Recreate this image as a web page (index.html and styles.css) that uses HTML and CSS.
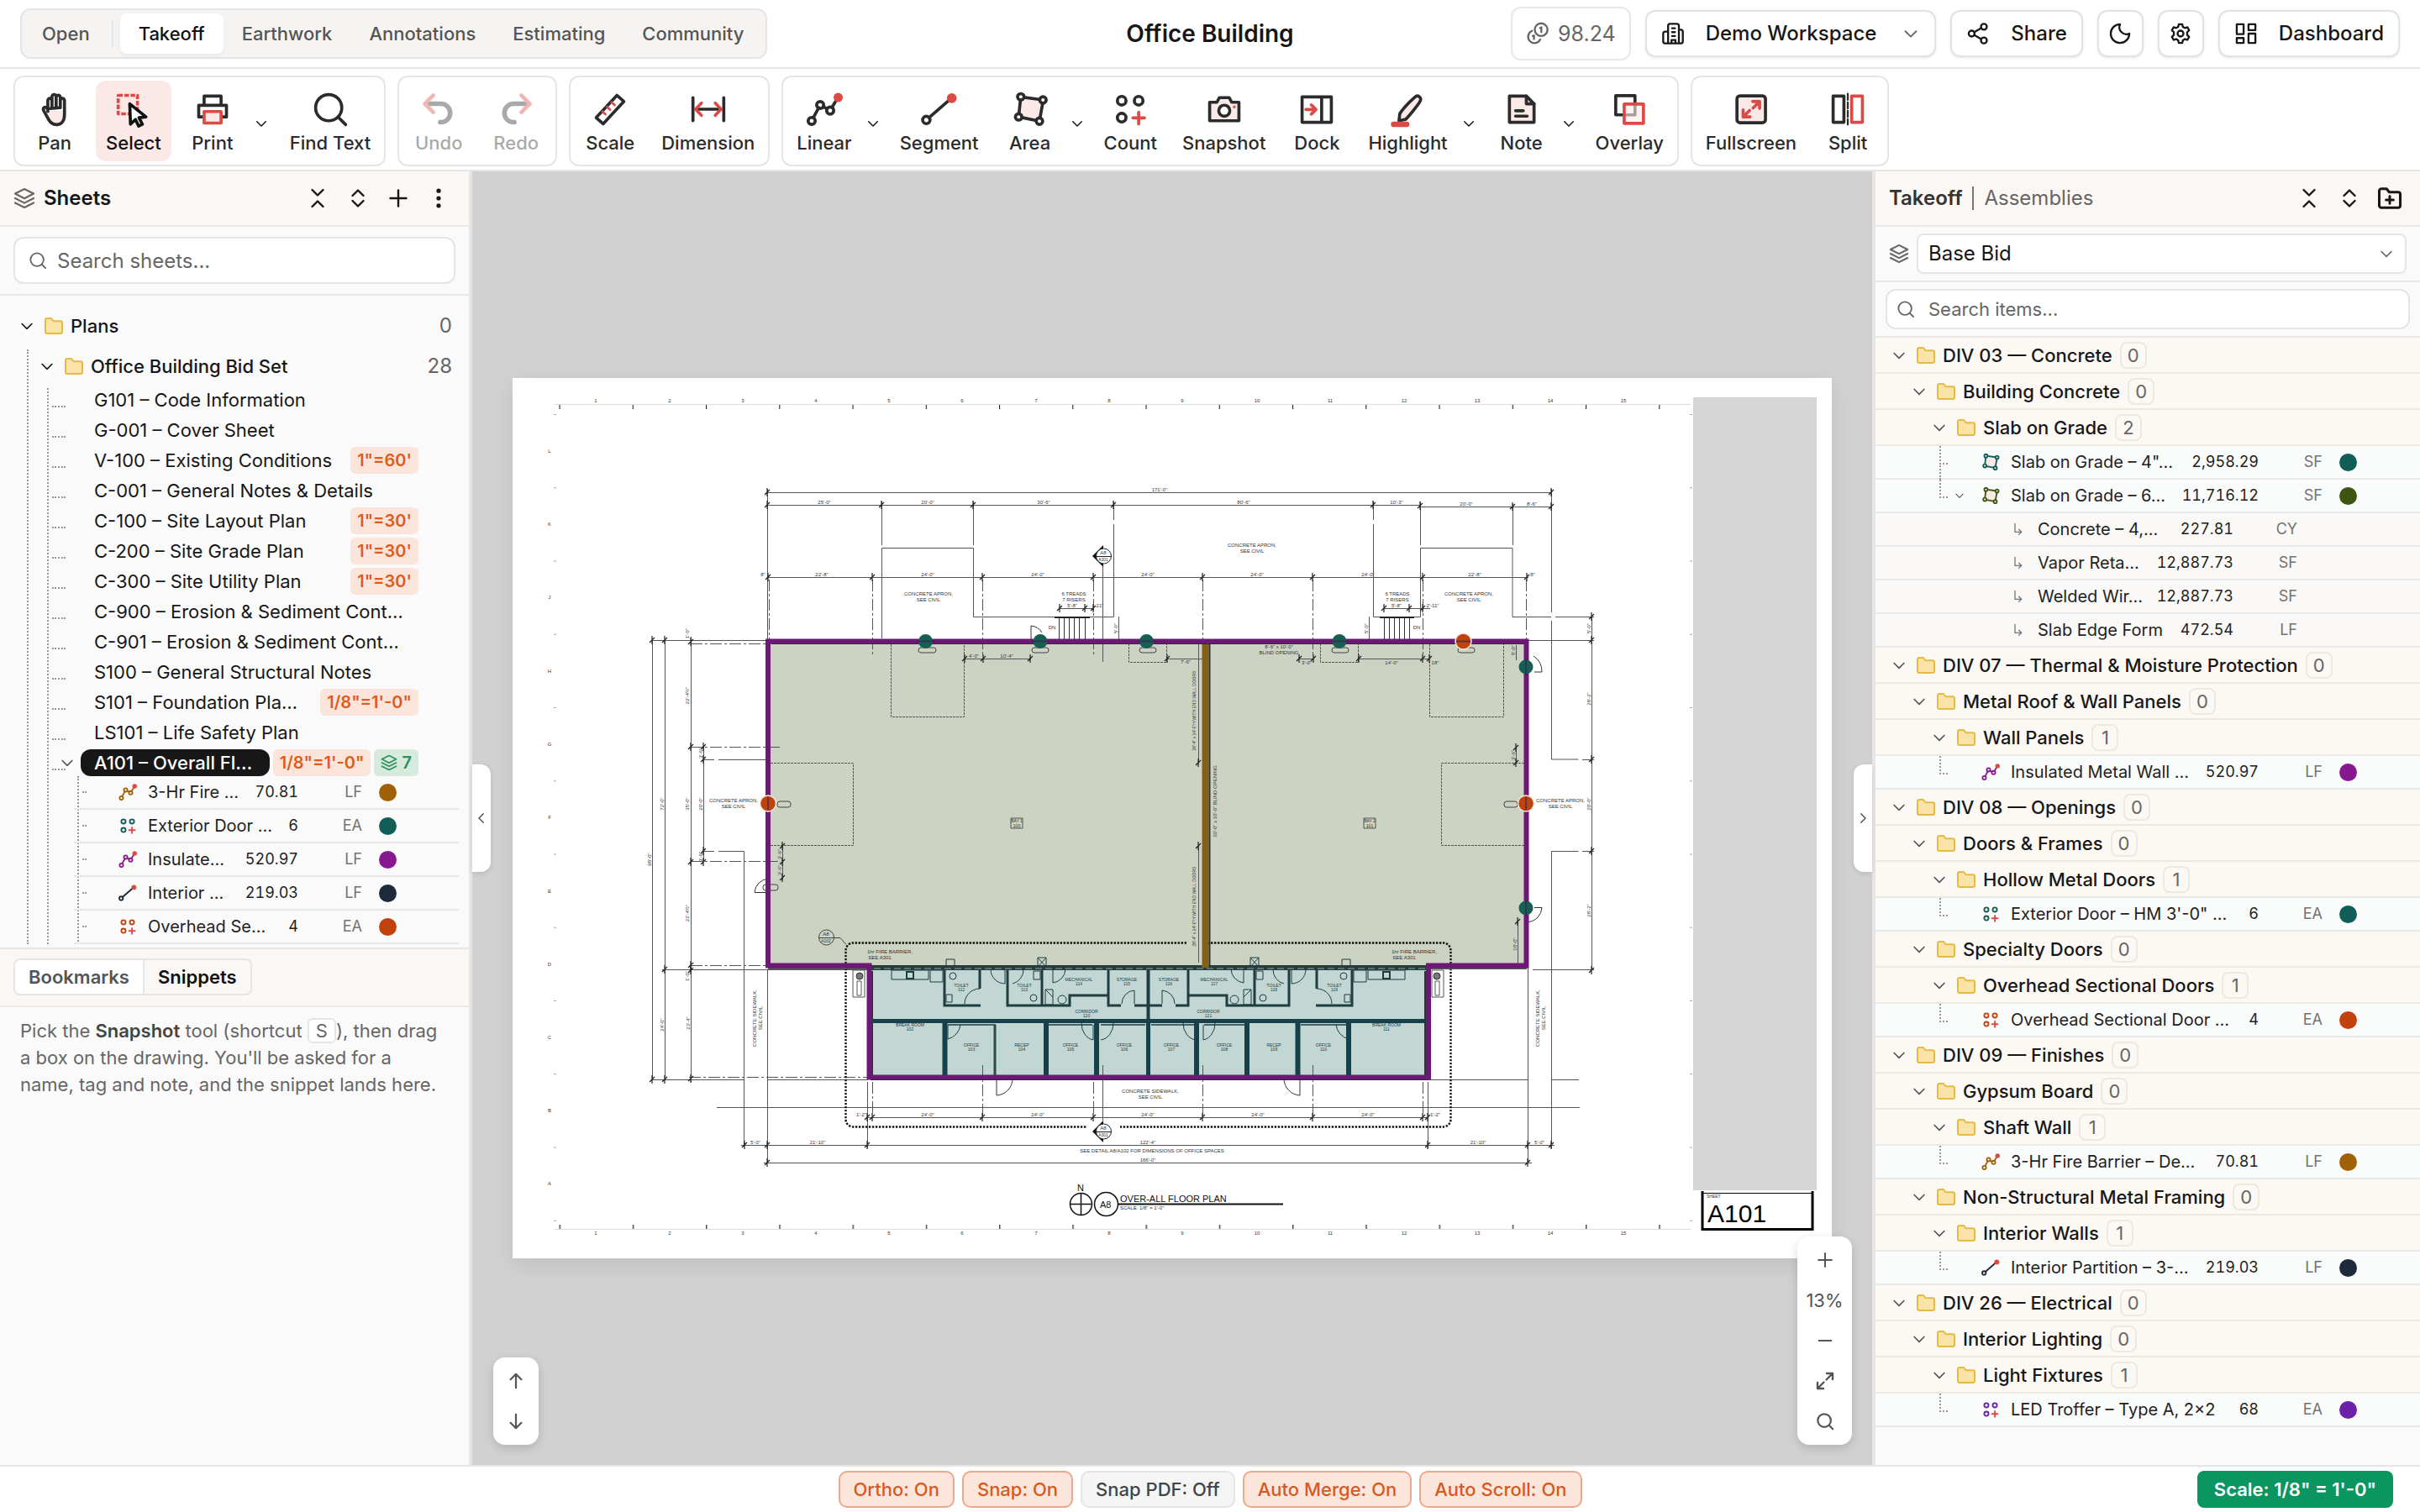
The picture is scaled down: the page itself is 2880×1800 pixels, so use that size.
FILE: index.html
```html
<!DOCTYPE html>
<html lang="en">
<head>
<meta charset="utf-8">
<title>Office Building</title>
<meta name="viewport" content="width=device-width, initial-scale=1">
<link rel="stylesheet" href="styles.css">
</head>
<body>
<svg class="defs" aria-hidden="true">
  <symbol id="chev" viewBox="0 0 24 24"><path d="m5 9 7 7 7-7"/></symbol>
  <symbol id="chev-left" viewBox="0 0 24 24"><path d="m15 5-7 7 7 7"/></symbol>
  <symbol id="chev-right" viewBox="0 0 24 24"><path d="m9 5 7 7-7 7"/></symbol>
  <symbol id="search" viewBox="0 0 24 24"><circle cx="11" cy="11" r="8.5"/><path d="m17.2 17.2 4.8 4.8"/></symbol>
  <symbol id="layers" viewBox="0 0 24 24"><path d="M12 1.8 22.2 7 12 12.2 1.8 7z"/><path d="m1.8 12 10.2 5.2L22.2 12"/><path d="m1.8 17 10.2 5.2L22.2 17"/></symbol>
  <symbol id="collapse" viewBox="0 0 24 24"><path d="m5.5 2 6.5 6.5L18.5 2M5.5 22l6.5-6.5 6.5 6.5"/></symbol>
  <symbol id="expand" viewBox="0 0 24 24"><path d="m5.5 9 6.5-6.5L18.5 9M5.5 15l6.5 6.5 6.5-6.5"/></symbol>
  <symbol id="plus" viewBox="0 0 24 24"><path d="M12 2.5v19M2.5 12h19"/></symbol>
  <symbol id="minus" viewBox="0 0 24 24"><path d="M4 12h16"/></symbol>
  <symbol id="dots" viewBox="0 0 24 24"><g fill="currentColor" stroke="none"><circle cx="12" cy="3.2" r="2.6"/><circle cx="12" cy="12" r="2.6"/><circle cx="12" cy="20.8" r="2.6"/></g></symbol>
  <symbol id="folder" viewBox="0 0 24 24"><path d="M2 5a2 2 0 0 1 2-2h5l2.5 3.2H20a2 2 0 0 1 2 2V19a2 2 0 0 1-2 2H4a2 2 0 0 1-2-2z" fill="#fae3a7" stroke="#e6bb45"/></symbol>
  <symbol id="folder-plus" viewBox="0 0 24 24"><path d="M2 5a2 2 0 0 1 2-2h5l2.5 3.2H20a2 2 0 0 1 2 2V19a2 2 0 0 1-2 2H4a2 2 0 0 1-2-2zM12 10v7M8.500 13.500h7"/></symbol>
  <symbol id="arrow-up" viewBox="0 0 24 24"><path d="M12 21V3M5 10l7-7 7 7"/></symbol>
  <symbol id="arrow-down" viewBox="0 0 24 24"><path d="M12 3v18M5 14l7 7 7-7"/></symbol>
  <symbol id="fit" viewBox="0 0 24 24"><path d="M14 3h7v7M21 3l-7.500 7.500M10 21H3v-7M3 21l7.500-7.500"/></symbol>
  <symbol id="sub" viewBox="0 0 24 24"><path d="M6 2v15h11M13 12.500 17.500 17 13 21.500"/></symbol>
  <symbol id="t-line" viewBox="0 0 24 24"><path d="M4.800 17.600 8.400 11M11.500 10.600l2.200 1M17 10.800l3-5"/><circle cx="3.800" cy="19.600" r="2.300"/><circle cx="9.300" cy="9.300" r="2.300"/><circle cx="15.800" cy="12.900" r="2.300"/><circle class="red-fill" cx="21" cy="4.400" r="3"/></symbol>
  <symbol id="t-seg" viewBox="0 0 24 24"><path d="M5.200 17.500 19 5.500"/><circle cx="3.500" cy="19" r="2.400"/><circle class="red-fill" cx="20" cy="4.800" r="3.200"/></symbol>
  <symbol id="t-area" viewBox="0 0 24 24"><path class="tint" d="M5.900 4 20.500 6 18 19.800 4.500 17z"/><g class="node"><circle cx="5.900" cy="4" r="2.100"/><circle cx="20.300" cy="6" r="2.100"/><circle cx="18" cy="19.800" r="2.100"/><circle cx="4.500" cy="17" r="2.100"/></g></symbol>
  <symbol id="t-count" viewBox="0 0 24 24"><circle cx="6.500" cy="6.500" r="2.800"/><circle cx="17.500" cy="6.500" r="2.800"/><circle cx="6.500" cy="17.500" r="2.800"/><path class="red" d="M17.500 14v7.500M13.800 17.700h7.500"/></symbol>
</svg>

<header class="topbar">
  <nav class="tabs" aria-label="Workspace">
    <button class="tab">Open</button>
    <span class="tab-divider"></span>
    <button class="tab tab-active">Takeoff</button>
    <button class="tab">Earthwork</button>
    <button class="tab">Annotations</button>
    <button class="tab">Estimating</button>
    <button class="tab">Community</button>
  </nav>
  <h1 class="title">Office Building</h1>
  <div class="actions">
    <span class="credits"><svg class="i28" viewBox="0 0 24 24"><circle cx="15.500" cy="8" r="6.500"/><path d="M6.200 9.200A6.500 6.500 0 1 0 14.600 18M14.500 6.200l1.200-.6V10.500M7 14.500l1.200-.5v3.500"/></svg>98.24</span>
    <button class="btn"><svg class="i28" viewBox="0 0 24 24"><path d="M7 22V4a2 2 0 0 1 2-2h7a2 2 0 0 1 2 2v18M7 10H4a2 2 0 0 0-2 2v8a2 2 0 0 0 2 2h16a2 2 0 0 0 2-2V10a2 2 0 0 0-2-2h-2M11 6.500h3M11 10.500h3M11 14.500h3M10.500 22v-3.500h4V22"/></svg>Demo Workspace<svg class="i22 caret"><use href="#chev"/></svg></button>
    <button class="btn"><svg class="i28" viewBox="0 0 24 24"><circle cx="18" cy="5" r="3"/><circle cx="5.500" cy="12" r="3"/><circle cx="18" cy="19" r="3"/><path d="m8.200 10.500 7-4M8.200 13.500l7 4"/></svg>Share</button>
    <button class="btn btn-icon" aria-label="Dark mode"><svg class="i28" viewBox="0 0 24 24"><path d="M12 2.500a7.200 7.200 0 0 0 9.500 9.500A9.500 9.500 0 1 1 12 2.500z"/></svg></button>
    <button class="btn btn-icon" aria-label="Settings"><svg class="i28" viewBox="0 0 24 24"><path d="M10.200 2.500h3.600l.6 2.700 2 1.100 2.600-.8 1.800 3.100-2 1.900v2.900l2 1.900-1.800 3.100-2.600-.8-2 1.200-.6 2.700h-3.600l-.6-2.700-2-1.200-2.600.8-1.800-3.100 2-1.900v-2.900l-2-1.900 1.800-3.100 2.600.8 2-1.100z"/><circle cx="12" cy="12" r="3"/></svg></button>
    <button class="btn"><svg class="i28" viewBox="0 0 24 24"><rect x="2.500" y="2.500" width="7" height="10"/><rect x="14.500" y="2.500" width="7" height="6"/><rect x="14.500" y="12" width="7" height="9.500"/><rect x="2.500" y="16.500" width="7" height="5"/></svg>Dashboard</button>
  </div>
</header>

<div class="toolbar" role="toolbar" aria-label="Tools">
  <div class="group">
    <button class="tool"><svg viewBox="0 0 24 24"><path class="tint" stroke="none" d="M7 13h11v3c0 4-2 6-5 6s-4-1-6-5z"/><path d="M7.600 13.500V6.300a1.300 1.300 0 0 1 2.700 0V11M10.300 11V3.800a1.300 1.300 0 0 1 2.700 0V11M13 11V4.300a1.300 1.300 0 0 1 2.700 0V11M15.700 11V6.300a1.300 1.300 0 0 1 2.700 0V15.500c0 4-1.800 6.500-5.200 6.500-3 0-4.400-1.600-5.600-4.200L4.800 12.700c-.4-1.100 0-1.700.7-1.900.8-.2 1.400.2 1.700.9z"/></svg>Pan</button>
    <button class="tool tool-active"><svg viewBox="0 0 24 24"><path class="red dash" d="M2 3h12.500v12H2z"/><path d="M9.500 8.500 20 17l-4.500.5 2.200 4.300-2.400 1.200-2.100-4.300-3.200 3z" fill="#fff"/></svg>Select</button>
    <button class="tool"><svg viewBox="0 0 24 24"><path d="M6.500 9V3.500h11V9M6 17H3V9.500h18V17h-3"/><path class="red tint" d="M6.500 13.500h11V21h-11z"/></svg>Print</button>
    <button class="more more-wide" aria-label="Print options"><svg class="i18"><use href="#chev"/></svg></button>
    <button class="tool"><svg><use href="#search"/></svg>Find Text</button>
  </div>
  <div class="group">
    <button class="tool" disabled><svg viewBox="0 0 24 24"><path d="M4 8.500h9.500a6 6 0 0 1 0 12H13" stroke-width="3"/><path class="red" d="M8.500 3 3 8.500 8.500 14" stroke-width="2.500"/></svg>Undo</button>
    <button class="tool" disabled><svg viewBox="0 0 24 24"><path d="M20 8.500h-9.500a6 6 0 0 0 0 12H11" stroke-width="3"/><path class="red" d="M15.500 3 21 8.500 15.500 14" stroke-width="2.500"/></svg>Redo</button>
  </div>
  <div class="group">
    <button class="tool"><svg viewBox="0 0 24 24"><path d="m16.500 3 4.500 4L7.500 21.500 3 17.500z"/><path class="red" d="m7 13.500 2 1.800M10 10.500l2 1.800M13 7.500l2 1.800" stroke-width="1.500"/></svg>Scale</button>
    <button class="tool"><svg viewBox="0 0 24 24"><path d="M2 4.500v15M22 4.500v15M4 12h16"/><path class="red" d="M7.500 8 3.700 12l3.800 4M16.500 8l3.800 4-3.800 4"/></svg>Dimension</button>
  </div>
  <div class="group">
    <button class="tool"><svg><use href="#t-line"/></svg>Linear</button>
    <button class="more" aria-label="Linear options"><svg class="i18"><use href="#chev"/></svg></button>
    <button class="tool"><svg><use href="#t-seg"/></svg>Segment</button>
    <button class="tool"><svg><use href="#t-area"/></svg>Area</button>
    <button class="more" aria-label="Area options"><svg class="i18"><use href="#chev"/></svg></button>
    <button class="tool"><svg><use href="#t-count"/></svg>Count</button>
    <button class="tool"><svg viewBox="0 0 24 24"><path class="tint" d="M2.500 7.500h4.700l1.600-3h6.400l1.600 3h4.700v12h-19z"/><circle cx="12" cy="13" r="3.600" fill="#fff"/><circle class="red-fill" cx="18.500" cy="10.500" r=".9"/></svg>Snapshot</button>
    <button class="tool"><svg viewBox="0 0 24 24"><path d="M2.500 4h19v16.500h-19zM15.200 4v16.500"/><path class="red" d="M5 12.200h6M8.500 9.200l3 3-3 3"/></svg>Dock</button>
    <button class="tool"><svg viewBox="0 0 24 24"><path class="tint" d="M17.500 3.700c1.200-.9 3.500.6 3 2.500-.3 1.300-6.500 9.300-9.500 12.300l-4.500 1 .5-4.500c2.500-4 8.500-9.900 10.500-11.300z"/><path class="red" d="M3 21.800h8.500" stroke-width="3.500"/></svg>Highlight</button>
    <button class="more" aria-label="Highlight options"><svg class="i18"><use href="#chev"/></svg></button>
    <button class="tool"><svg viewBox="0 0 24 24"><path class="tint" d="M4 3.500h11l5 5V20.500H4z"/><path d="M15 3.500v5h5M8 13h5M8 16.500h7.500"/></svg>Note</button>
    <button class="more" aria-label="Note options"><svg class="i18"><use href="#chev"/></svg></button>
    <button class="tool"><svg viewBox="0 0 24 24"><path d="M3.200 3.200h12.500v12.500H3.200z"/><path class="red tint" fill-opacity=".6" d="M8.700 8.700h12.500v12.500H8.700z"/></svg>Overlay</button>
  </div>
  <div class="group">
    <button class="tool"><svg viewBox="0 0 24 24"><rect class="tint" x="2.800" y="3.300" width="18.500" height="17.500" rx="2"/><path class="red" d="M13 7h4.500v4.500M17.500 7l-4.200 4.200M11.300 17H6.800v-4.500M6.800 17l4.200-4.200"/></svg>Fullscreen</button>
    <button class="tool"><svg viewBox="0 0 24 24"><path d="M2.500 3.500h7v17h-7z"/><path d="M12 2v20" stroke-width="1.200" stroke-dasharray="4 1.500"/><path class="red" d="M14.500 3.500h7v17h-7z"/></svg>Split</button>
  </div>
</div>

<div class="work">
  <aside class="sheets">
    <div class="panel-head">
      <svg class="i26 muted"><use href="#layers"/></svg><h2>Sheets</h2>
      <div class="head-tools">
        <button aria-label="Collapse all"><svg class="i24"><use href="#collapse"/></svg></button>
        <button aria-label="Expand all"><svg class="i24"><use href="#expand"/></svg></button>
        <button aria-label="Add"><svg class="i24"><use href="#plus"/></svg></button>
        <button aria-label="More"><svg class="i24"><use href="#dots"/></svg></button>
      </div>
    </div>
    <div class="search-row search-sheets">
      <label class="search"><svg class="i22"><use href="#search"/></svg><input type="text" placeholder="Search sheets..." aria-label="Search sheets"></label>
    </div>
    <div class="tree">
      <div class="folder folder-a"><svg class="i20"><use href="#chev"/></svg><svg class="i24 fo"><use href="#folder"/></svg><span>Plans</span><span class="total">0</span></div>
      <div class="branch branch-a">
        <div class="folder folder-b"><svg class="i20"><use href="#chev"/></svg><svg class="i24 fo"><use href="#folder"/></svg><span>Office Building Bid Set</span><span class="total">28</span></div>
        <ul class="branch branch-b">
          <li class="sheet"><button>G101 – Code Information</button></li>
          <li class="sheet"><button>G-001 – Cover Sheet</button></li>
          <li class="sheet"><button>V-100 – Existing Conditions</button><span class="scale">1"=60'</span></li>
          <li class="sheet"><button>C-001 – General Notes &amp; Details</button></li>
          <li class="sheet"><button>C-100 – Site Layout Plan</button><span class="scale">1"=30'</span></li>
          <li class="sheet"><button>C-200 – Site Grade Plan</button><span class="scale">1"=30'</span></li>
          <li class="sheet"><button>C-300 – Site Utility Plan</button><span class="scale">1"=30'</span></li>
          <li class="sheet"><button>C-900 – Erosion &amp; Sediment Cont…</button></li>
          <li class="sheet"><button>C-901 – Erosion &amp; Sediment Cont…</button></li>
          <li class="sheet"><button>S100 – General Structural Notes</button></li>
          <li class="sheet"><button>S101 – Foundation Pla…</button><span class="scale">1/8"=1'-0"</span></li>
          <li class="sheet"><button>LS101 – Life Safety Plan</button></li>
          <li class="sheet sheet-open"><svg class="i20"><use href="#chev"/></svg><button>A101 – Overall Fl…</button><span class="scale">1/8"=1'-0"</span><span class="scale layers"><svg class="i20"><use href="#layers"/></svg>7</span></li>
          <li>
            <ul class="branch branch-c">
              <li class="item c-brown"><svg class="ty"><use href="#t-line"/></svg><span class="name">3-Hr Fire …</span><span class="qty">70.81</span><span class="unit">LF</span><i class="dot"></i></li>
              <li class="item c-teal"><svg class="ty"><use href="#t-count"/></svg><span class="name">Exterior Door …</span><span class="qty">6</span><span class="unit">EA</span><i class="dot"></i></li>
              <li class="item c-purple"><svg class="ty"><use href="#t-line"/></svg><span class="name">Insulate…</span><span class="qty">520.97</span><span class="unit">LF</span><i class="dot"></i></li>
              <li class="item c-navy"><svg class="ty"><use href="#t-seg"/></svg><span class="name">Interior …</span><span class="qty">219.03</span><span class="unit">LF</span><i class="dot"></i></li>
              <li class="item c-orange"><svg class="ty"><use href="#t-count"/></svg><span class="name">Overhead Se…</span><span class="qty">4</span><span class="unit">EA</span><i class="dot"></i></li>
            </ul>
          </li>
        </ul>
      </div>
    </div>
    <section class="snips">
      <div class="snips-head"><div class="seg"><button>Bookmarks</button><button class="seg-on">Snippets</button></div></div>
      <p>Pick the <b>Snapshot</b> tool (shortcut <kbd>S</kbd>), then drag a box on the drawing. You'll be asked for a name, tag and note, and the snippet lands here.</p>
    </section>
  </aside>

  <main class="canvas">
    <svg class="page" viewBox="610 450 1570 1048" role="img" aria-label="Overall floor plan">
      <defs>
        <pattern id="ticks-top" x="665.500" y="481" width="87.250" height="8" patternUnits="userSpaceOnUse"><path d="M.5 0v6M-1 .5h4" stroke="#222" stroke-width="1.200"/></pattern>
        <pattern id="ticks-bot" x="665.500" y="1457" width="87.250" height="8" patternUnits="userSpaceOnUse"><path d="M.8 1v6M0 6.500h3" stroke="#222" stroke-width="1.200"/></pattern>
        <path id="tk" d="M-3 3 3-3M0-5V5" stroke="#222" stroke-width="1.200" fill="none"/>
        <g id="room"><path d="M-7-6v12H7V-6z" fill="none" stroke="#555" stroke-width="1"/></g>
        <g id="half" fill="none" stroke="#1d3d41">
          <path stroke-width="3" d="M1124 1154v43h43M1166 1154v23M1199 1154v43h41v-43M1240 1197h33v-12h46M1319 1154v43h15M1350 1197h16M1366 1154v60"/>
          <path stroke-width="1" d="M1179 1154a17 17 0 0 0 17 17v-17M1205 1171a17 17 0 0 0 13-17M1253 1154v16a17 17 0 0 0 15-16M1166 1177a18 18 0 0 0-18 18M1350 1195v-16a16 16 0 0 0-15 16M1061 1155h44v11h-44zM1107 1155h15v14h-15zM1244 1178h9v18h-9zM1244 1178l9 9M1126 1184h7v9h-7zM1230 1156h8v10h-8zM1126 1142h10v9h-10zM1235 1140h10v11h-10zM1235 1140l10 11M1245 1140l-10 11"/>
          <path stroke-width="1" d="M1128 1220v17a20 20 0 0 0 15-17M1287 1218a17 20 0 0 0 14 20v-18M1310 1238a17 20 0 0 0 15-20"/>
          <path stroke-width="1.500" d="M1128 1220h57M1248 1220h52M1310 1220h53"/>
          <circle cx="1134" cy="1162" r="4"/><circle cx="1230" cy="1188" r="4"/><circle cx="1264" cy="1190" r="5"/><path stroke-width="2" d="M1079 1157h8v8h-8z"/>
          <path stroke="#555" stroke-width="1" d="M1015 1155h14v32h-14zM1020 1168h5v17h-5z"/><circle cx="1023" cy="1162" r="4" stroke="#333" fill="#777"/>
          <path stroke="#333" stroke-width="1" d="M1186 1284v20a20 20 0 0 0 19-20"/>
        </g>
      </defs>
      <rect x="610" y="450" width="1570" height="1048" fill="#fff"/>
      <rect x="665" y="481" width="1347" height="8" fill="url(#ticks-top)"/>
      <rect x="665" y="1457" width="1347" height="8" fill="url(#ticks-bot)"/>
      <path d="M660 481.500h1352M660 1463.500h1352" stroke="#ddd" stroke-width="1"/>
      <path d="M660.500 493v965M2012.500 493v965" stroke="#aaa" stroke-width="3" stroke-dasharray="1 86.250"/>
      <g class="tiny mid">
        <text x="709" y="479">1</text><text x="797" y="479">2</text><text x="884" y="479">3</text><text x="971" y="479">4</text><text x="1058" y="479">5</text><text x="1145" y="479">6</text><text x="1233" y="479">7</text><text x="1320" y="479">8</text><text x="1407" y="479">9</text><text x="1496" y="479">10</text><text x="1583" y="479">11</text><text x="1671" y="479">12</text><text x="1758" y="479">13</text><text x="1845" y="479">14</text><text x="1932" y="479">15</text>
        <text x="709" y="1470">1</text><text x="797" y="1470">2</text><text x="884" y="1470">3</text><text x="971" y="1470">4</text><text x="1058" y="1470">5</text><text x="1145" y="1470">6</text><text x="1233" y="1470">7</text><text x="1320" y="1470">8</text><text x="1407" y="1470">9</text><text x="1496" y="1470">10</text><text x="1583" y="1470">11</text><text x="1671" y="1470">12</text><text x="1758" y="1470">13</text><text x="1845" y="1470">14</text><text x="1932" y="1470">15</text>
        <text x="654" y="539">L</text><text x="654" y="626">K</text><text x="654" y="713">J</text><text x="654" y="801">H</text><text x="654" y="888">G</text><text x="654" y="975">F</text><text x="654" y="1063">E</text><text x="654" y="1150">D</text><text x="654" y="1237">C</text><text x="654" y="1324">B</text><text x="654" y="1411">A</text>
      </g>

      <path d="M914 763h903v387H914z" fill="#ccd3c3"/>
      <path d="M1035 1150h665v132h-665z" fill="#c2d6d4"/>

      <g fill="none" stroke="#555" stroke-width="1">
        <path d="M914 586.500h932M914 601.500h777M1691 603.500h155M914 687.500h905M1261 724.500h40M1647 724.500h55"/>
        <path d="M913.500 582v180M1049.500 597v52M1158.500 597v52M1325.500 597v22M1634.500 597v22M1690.500 597v52M1800.500 600v49M1846.500 582v147"/>
        <path d="M1049.500 760V652.500h109V734.500h167V624M1634.500 624v110.500h56V652.500H1800V734.500h46M1851 734.500h46M1846.500 739v165h32M1883 904.500h14M1846.500 1285V1013.500h32M1883 1013.500h14M1819 762.500h78M1824 1154.500h73"/>
        <path d="M1894.500 734v421M776.500 762v523M791.500 762v523M822.500 758v530M837.500 889v137"/>
        <path d="M776 762.500h137M838 904.500h12M855 904.500h57M838 1013.500h12M855 1013.500h30.500V1364M788 1154.500h245M776 1285.500h109M913 1285.500h120M1700 1285.500h118M1846 1285.500h33M853 1318.500h1027"/>
        <path d="M913.500 1154v231M1032.500 1288v79M1699.500 1288v79M1818.500 766v619M1846.500 1285v82"/>
        <path d="M1032 1330.500h668M882 1363.500h968M909 1384.500h914"/>
        <path d="M1312.500 672v116M1312.500 1268v66M1426.500 766v143M1426.500 1007v139M1148 784.500h79M1389 784.500h42M1546 784.500h17M1617 784.500h84M1804.500 768v18M1804.500 890v18M931.500 1007v40M1806.500 1097v50M1331.500 734v28M1629.500 734v28"/>
        <path stroke-dasharray="14 3 3 3" d="M915.500 690v72M1038.500 690v89M1169.500 690v89M1301.500 690v89M1431.500 690v72M1562.500 690v89M1693.500 690v89M1816.500 690v72M822 766.500h91M822 889.500h106M822 1025.500h104M822 1149.500h91M820 1282.500h213M1038.500 1288v40M1169.500 1268v60M1301.500 1288v40M1431.500 1268v60M1562.500 1268v60M1693.500 1288v40"/>
        <g stroke-dasharray="3 1"><path d="M1060.500 767v86.500h87V767M917 908.500h98.500v98H917M1343.500 766v22.500h45V766M1571.500 766v22.500h45V766M1701.500 767v86.500h88V767M1818 908.500h-102.500v98H1818"/></g>
        <path stroke="#333" d="M1260.500 735v27M1266.500 735v27M1272.500 735v27M1278.500 735v27M1284.500 735v27M1291.500 735v27M1647.500 735v27M1653.500 735v27M1659.500 735v27M1665.500 735v27M1671.500 735v27M1677.500 735v27"/>
        <path stroke="#222" stroke-width="2" d="M1255 735h42M1642 735h41"/>
        <path stroke="#333" d="M1227 762v-17a17 17 0 0 1 13 8M898 1062.500h16M898 1062a18 18 0 0 1 16-16M1826 800h9a22 22 0 0 0-10-19M1826 1080.500h9a18 18 0 0 1-16 17"/>
      </g>
      <g>
        <use href="#tk" x="913" y="586"/><use href="#tk" x="1846" y="586"/><use href="#tk" x="913" y="601"/><use href="#tk" x="1049" y="601"/><use href="#tk" x="1158" y="601"/><use href="#tk" x="1325" y="601"/><use href="#tk" x="1634" y="601"/><use href="#tk" x="1690" y="602"/><use href="#tk" x="1800" y="603"/><use href="#tk" x="1846" y="603"/>
        <use href="#tk" x="914" y="687"/><use href="#tk" x="1038" y="687"/><use href="#tk" x="1169" y="687"/><use href="#tk" x="1301" y="687"/><use href="#tk" x="1431" y="687"/><use href="#tk" x="1562" y="687"/><use href="#tk" x="1693" y="687"/><use href="#tk" x="1817" y="687"/>
        <use href="#tk" x="1261" y="724"/><use href="#tk" x="1291" y="724"/><use href="#tk" x="1301" y="724"/><use href="#tk" x="1647" y="724"/><use href="#tk" x="1677" y="724"/><use href="#tk" x="1693" y="724"/>
        <use href="#tk" x="1894" y="734"/><use href="#tk" x="1894" y="762"/><use href="#tk" x="1894" y="904"/><use href="#tk" x="1894" y="1013"/><use href="#tk" x="1894" y="1155"/>
        <use href="#tk" x="776" y="762"/><use href="#tk" x="791" y="762"/><use href="#tk" x="822" y="764"/><use href="#tk" x="822" y="889"/><use href="#tk" x="822" y="1026"/><use href="#tk" x="822" y="1149"/><use href="#tk" x="822" y="1155"/><use href="#tk" x="822" y="1284"/><use href="#tk" x="791" y="1154"/><use href="#tk" x="791" y="1285"/><use href="#tk" x="776" y="1285"/><use href="#tk" x="837" y="889"/><use href="#tk" x="837" y="904"/><use href="#tk" x="837" y="1013"/><use href="#tk" x="837" y="1026"/>
        <use href="#tk" x="1032" y="1330"/><use href="#tk" x="1038" y="1330"/><use href="#tk" x="1169" y="1330"/><use href="#tk" x="1301" y="1330"/><use href="#tk" x="1431" y="1330"/><use href="#tk" x="1562" y="1330"/><use href="#tk" x="1693" y="1330"/><use href="#tk" x="1699" y="1330"/>
        <use href="#tk" x="886" y="1363"/><use href="#tk" x="913" y="1363"/><use href="#tk" x="1032" y="1363"/><use href="#tk" x="1699" y="1363"/><use href="#tk" x="1818" y="1363"/><use href="#tk" x="1846" y="1363"/><use href="#tk" x="913" y="1384"/><use href="#tk" x="1818" y="1384"/>
        <use href="#tk" x="1148" y="784"/><use href="#tk" x="1170" y="784"/><use href="#tk" x="1226" y="784"/><use href="#tk" x="1389" y="784"/><use href="#tk" x="1546" y="784"/><use href="#tk" x="1563" y="784"/><use href="#tk" x="1617" y="784"/><use href="#tk" x="1693" y="784"/><use href="#tk" x="1701" y="784"/><use href="#tk" x="1426" y="908"/><use href="#tk" x="1426" y="1007"/><use href="#tk" x="931" y="1007"/><use href="#tk" x="931" y="1026"/><use href="#tk" x="931" y="1045"/><use href="#tk" x="1804" y="890"/><use href="#tk" x="1804" y="908"/><use href="#tk" x="1806" y="1097"/>
      </g>
      <g class="tiny mid">
        <text x="1380" y="585">171'-0"</text><text x="981" y="600">25'-0"</text><text x="1104" y="600">20'-0"</text><text x="1242" y="600">30'-6"</text><text x="1480" y="600">80'-6"</text><text x="1662" y="600">10'-3"</text><text x="1745" y="602">20'-0"</text><text x="1823" y="602">8'-6"</text>
        <text x="908" y="686">8"</text><text x="978" y="686">22'-8"</text><text x="1104" y="686">24'-0"</text><text x="1235" y="686">24'-0"</text><text x="1366" y="686">24'-0"</text><text x="1496" y="686">24'-0"</text><text x="1628" y="686">24'-0"</text><text x="1755" y="686">22'-8"</text><text x="1824" y="686">8"</text>
        <text x="1105" y="709">CONCRETE APRON,</text><text x="1105" y="716">SEE CIVIL</text><text x="1490" y="651">CONCRETE APRON,</text><text x="1490" y="658">SEE CIVIL</text><text x="1748" y="709">CONCRETE APRON,</text><text x="1748" y="716">SEE CIVIL</text><text x="873" y="955">CONCRETE APRON,</text><text x="873" y="962">SEE CIVIL</text><text x="1857" y="955">CONCRETE APRON,</text><text x="1857" y="962">SEE CIVIL</text>
        <text x="1278" y="709">6 TREADS</text><text x="1278" y="716">7 RISERS</text><text x="1663" y="709">6 TREADS</text><text x="1663" y="716">7 RISERS</text><text x="1276" y="723">5'-8"</text><text x="1309" y="723">21"</text><text x="1662" y="723">5'-8"</text><text x="1705" y="723">2'-11"</text><text x="1252" y="749">DN</text><text x="1686" y="749">DN</text>
        <text x="1159" y="783">4'-0"</text><text x="1198" y="783">10'-4"</text><text x="1411" y="790">7'-6"</text><text x="1555" y="791">3'-0"</text><text x="1656" y="791">14'-0"</text><text x="1708" y="791">18"</text><text x="1522" y="772">8'-6" x 10'-0"</text><text x="1522" y="779">BLIND OPENING</text>
        <text x="1369" y="1301">CONCRETE SIDEWALK,</text><text x="1369" y="1308">SEE CIVIL</text>
        <text x="1025" y="1329">1'-2"</text><text x="1104" y="1329">24'-0"</text><text x="1235" y="1329">24'-0"</text><text x="1366" y="1329">24'-0"</text><text x="1497" y="1329">24'-0"</text><text x="1628" y="1329">24'-0"</text><text x="1708" y="1329">1'-2"</text>
        <text x="899" y="1362">5'-0"</text><text x="973" y="1362">21'-10"</text><text x="1366" y="1362">122'-4"</text><text x="1759" y="1362">21'-10"</text><text x="1832" y="1362">5'-0"</text><text x="1371" y="1372">SEE DETAIL A8/A102 FOR DIMENSIONS OF OFFICE SPACES</text><text x="1366" y="1383">166'-0"</text>
        <text transform="translate(775 1023) rotate(-90)">98'-0"</text><text transform="translate(790 957) rotate(-90)">72'-0"</text><text transform="translate(820 957) rotate(-90)">35'-0"</text><text transform="translate(836 957) rotate(-90)">20'-0"</text><text transform="translate(820 828) rotate(-90)">22'-4½"</text><text transform="translate(820 1087) rotate(-90)">22'-4½"</text><text transform="translate(790 1220) rotate(-90)">24'-0"</text><text transform="translate(821 1218) rotate(-90)">23'-4"</text><text transform="translate(820 754) rotate(-90)">1'-0"</text><text transform="translate(836 897) rotate(-90)">3'-6"</text><text transform="translate(836 1020) rotate(-90)">3'-6"</text><text transform="translate(820 1162) rotate(-90)">1'-0"</text>
        <text transform="translate(1893 748) rotate(-90)">5'-0"</text><text transform="translate(1893 832) rotate(-90)">28'-2"</text><text transform="translate(1893 957) rotate(-90)">20'-0"</text><text transform="translate(1893 1084) rotate(-90)">28'-2"</text><text transform="translate(1330 748) rotate(-90)">5'-0"</text><text transform="translate(1628 748) rotate(-90)">5'-0"</text><text transform="translate(1803 774) rotate(-90)">5'-0"</text><text transform="translate(1803 899) rotate(-90)">3'-6"</text><text transform="translate(1805 1124) rotate(-90)">10'-0"</text><text transform="translate(930 1017) rotate(-90)">3'-6"</text><text transform="translate(930 1036) rotate(-90)">3'-6"</text>
        <text transform="translate(900 1212) rotate(-90)">CONCRETE SIDEWALK,</text><text transform="translate(907 1212) rotate(-90)">SEE CIVIL</text><text transform="translate(1832 1212) rotate(-90)">CONCRETE SIDEWALK,</text><text transform="translate(1839 1212) rotate(-90)">SEE CIVIL</text>
        <text class="t5" transform="translate(1423 846) rotate(-90)">26'-4" x 14'-0"H WITH END WALL DOORS</text><text class="t5" transform="translate(1423 1079) rotate(-90)">26'-4" x 14'-0"H WITH END WALL DOORS</text><text transform="translate(1448 954) rotate(-90)">10'-0" x 10'-0" BLIND OPENING</text>
        <text x="1210" y="979" class="t5">BAY 1</text><text x="1210" y="985" class="t5">100</text><text x="1630" y="979" class="t5">BAY 2</text><text x="1630" y="985" class="t5">101</text>
        <text x="1059" y="1135">1hr FIRE BARRIER,</text><text x="1047" y="1142">SEE A301</text><text x="1683" y="1135">1hr FIRE BARRIER,</text><text x="1671" y="1142">SEE A301</text>
      </g>
      <use href="#room" x="1210" y="980"/><use href="#room" x="1630" y="980"/>

      <g fill="none" stroke="#111" stroke-width="2.400" stroke-dasharray="2.400 1.600">
        <path d="M1412 1122.500H1016a9 9 0 0 0-9.500 9.500V1332a9 9 0 0 0 9.500 9.500H1294"/>
        <path d="M1437 1122.500H1717a9 9 0 0 1 9.500 9.500V1332a9 9 0 0 1-9.500 9.500H1333"/>
      </g>
      <use href="#half"/>
      <use href="#half" transform="matrix(-1 0 0 1 2733 0)"/>
      <g fill="none">
        <path d="M1036 1152h664" stroke="#263d3e" stroke-width="6"/>
        <path d="M1040 1153h656" stroke="#8fa5a3" stroke-width="1" stroke-dasharray="8 4"/>
        <path d="M914 1153h120M1700 1153h117" stroke="#555" stroke-width="2"/>
        <path d="M1038 1156v126M1696 1156v126" stroke="#333" stroke-width="2"/>
        <path d="M1036 1215.500h664" stroke="#17404a" stroke-width="5"/>
        <path d="M1184 1220v60" stroke="#2b4a4c" stroke-width="3"/>
        <path d="M1124.500 1216v66M1245 1216v66M1305 1216v66M1424 1216v66M1484 1216v66M1544.500 1216v66M1605 1216v66" stroke="#17404a" stroke-width="6"/>
        <path d="M1366.500 1216v66" stroke="#17404a" stroke-width="5"/>
        <path d="M1434.500 766v386" stroke="#856115" stroke-width="8"/>
        <path d="M1439.500 766v386" stroke="#333" stroke-width="2"/>
        <path d="M1034.500 1282.500V1149.500H914V763.500H1816.500V1149.500H1700V1282.500z" stroke="#6d1876" stroke-width="6"/>
        <path d="M918 766.500h896M1036 1285.500h664" stroke="#3d1f42" stroke-width="1"/>
      </g>
      <g class="room-text mid">
        <text x="1156" y="1246">OFFICE<tspan x="1156" dy="5">103</tspan></text><text x="1216" y="1246">RECEP<tspan x="1216" dy="5">104</tspan></text><text x="1274" y="1246">OFFICE<tspan x="1274" dy="5">105</tspan></text><text x="1338" y="1246">OFFICE<tspan x="1338" dy="5">106</tspan></text><text x="1394" y="1246">OFFICE<tspan x="1394" dy="5">107</tspan></text><text x="1457" y="1246">OFFICE<tspan x="1457" dy="5">108</tspan></text><text x="1516" y="1246">RECEP<tspan x="1516" dy="5">109</tspan></text><text x="1575" y="1246">OFFICE<tspan x="1575" dy="5">110</tspan></text>
        <text x="1144" y="1175">TOILET<tspan x="1144" dy="5">112</tspan></text><text x="1219" y="1175">TOILET<tspan x="1219" dy="5">113</tspan></text><text x="1284" y="1168">MECHANICAL<tspan x="1284" dy="5">114</tspan></text><text x="1341" y="1168">STORAGE<tspan x="1341" dy="5">115</tspan></text><text x="1391" y="1168">STORAGE<tspan x="1391" dy="5">116</tspan></text><text x="1445" y="1168">MECHANICAL<tspan x="1445" dy="5">117</tspan></text><text x="1516" y="1175">TOILET<tspan x="1516" dy="5">118</tspan></text><text x="1588" y="1175">TOILET<tspan x="1588" dy="5">119</tspan></text><text x="1293" y="1206">CORRIDOR<tspan x="1293" dy="5">120</tspan></text><text x="1438" y="1206">CORRIDOR<tspan x="1438" dy="5">121</tspan></text><text x="1083" y="1222">BREAK ROOM<tspan x="1083" dy="5">102</tspan></text><text x="1650" y="1222">BREAK ROOM<tspan x="1650" dy="5">111</tspan></text>
      </g>
      <g fill="none" stroke="#444" stroke-width="1">
        <rect x="1093" y="771" width="21" height="6" rx="3"/><rect x="1228" y="771" width="20" height="6" rx="3"/><rect x="1356" y="771" width="20" height="6" rx="3"/><rect x="1585" y="771" width="20" height="6" rx="3"/><rect x="1735" y="771" width="20" height="6" rx="3"/><rect x="925" y="954" width="16" height="7" rx="3"/><rect x="1790" y="954" width="16" height="7" rx="3"/><rect x="908" y="1053" width="18" height="7" rx="3"/>
      </g>
      <g fill="#175f54"><circle cx="1101.500" cy="763.500" r="8.500"/><circle cx="1238" cy="763.500" r="8.500"/><circle cx="1364.500" cy="763.500" r="8.500"/><circle cx="1594" cy="763.500" r="8.500"/><circle cx="1816" cy="794" r="8.500"/><circle cx="1816" cy="1081" r="8.500"/></g>
      <g fill="#bd430f" stroke="#f3e6dd" stroke-width="1.500"><circle cx="1741.500" cy="763.500" r="9.500"/><circle cx="1816" cy="956.500" r="9.500"/><circle cx="914" cy="956.500" r="9.500"/></g>
      <path d="M1091 763.500h22M1227 763.500h22M1354 763.500h22M1583 763.500h22M1733 763.500h17M1816 784v20M1816 949v15M914 949v15M1816 1071v20" stroke="#3b1f4a" stroke-opacity=".6" stroke-width="2"/>

      <g class="tiny mid">
        <path d="M1300 662 1313 649v26z" fill="#111"/><circle cx="1313.500" cy="662" r="9" fill="#fff" stroke="#222"/><path d="M1304 662.500h19" stroke="#222"/><text x="1313" y="660">A8</text><text x="1313" y="668" class="t5">A301</text>
        <path d="M1300 1347 1313 1334v26z" fill="#111"/><circle cx="1313.500" cy="1347" r="9" fill="#fff" stroke="#222"/><path d="M1304 1347.500h19" stroke="#222"/><text x="1313" y="1345">A8</text><text x="1313" y="1353" class="t5">A301</text>
        <circle cx="983.500" cy="1116" r="9" fill="none" stroke="#444"/><path d="M974 1116.500h26l7 8" fill="none" stroke="#444"/><text x="983" y="1114">A8</text><text x="983" y="1122" class="t5">A102</text>
      </g>
      <g fill="none" stroke="#111" stroke-width="1.500"><circle cx="1286.500" cy="1433.500" r="13"/><path d="M1286.500 1420v27M1273 1433.500h27"/><circle cx="1316.500" cy="1433.500" r="14"/><path d="M1331 1433.500h196" stroke-width="2"/></g>
      <text class="plan" x="1282" y="1418">N</text><text class="plan" x="1309" y="1438">A8</text><text class="plan" x="1333" y="1431">OVER-ALL FLOOR PLAN</text><text class="tiny" x="1333" y="1440">SCALE: 1/8" = 1'-0"</text>
      <path d="M2015 473h147v944h-147z" fill="#d5d5d5"/>
      <path d="M2026 1418v45.500h131V1418" fill="none" stroke="#000" stroke-width="3"/><path d="M2026 1420.500h131" stroke="#000"/>
      <text class="t5 tiny" x="2031" y="1426">SHEET</text><text class="sheet-no" x="2032" y="1455">A101</text>
    </svg>
    <button class="grip grip-left" aria-label="Hide sheets"><svg class="i18"><use href="#chev-left"/></svg></button>
    <button class="grip grip-right" aria-label="Hide takeoff"><svg class="i18"><use href="#chev-right"/></svg></button>
    <div class="float float-left"><button aria-label="Previous sheet"><svg class="i22"><use href="#arrow-up"/></svg></button><button aria-label="Next sheet"><svg class="i22"><use href="#arrow-down"/></svg></button></div>
    <div class="float float-right"><button aria-label="Zoom in"><svg class="i20"><use href="#plus"/></svg></button><span>13%</span><button aria-label="Zoom out"><svg class="i22"><use href="#minus"/></svg></button><button aria-label="Fit"><svg class="i24"><use href="#fit"/></svg></button><button aria-label="Zoom to area"><svg class="i22"><use href="#search"/></svg></button></div>
  </main>

  <aside class="takeoff">
    <div class="panel-head">
      <h2>Takeoff</h2><span class="bar"></span><a href="#assemblies">Assemblies</a>
      <div class="head-tools">
        <button aria-label="Collapse all"><svg class="i24"><use href="#collapse"/></svg></button>
        <button aria-label="Expand all"><svg class="i24"><use href="#expand"/></svg></button>
        <button aria-label="New folder"><svg class="i30"><use href="#folder-plus"/></svg></button>
      </div>
    </div>
    <div class="bid-row"><svg class="i24 muted"><use href="#layers"/></svg><div class="pick"><select aria-label="Bid"><option>Base Bid</option></select><svg class="i20"><use href="#chev"/></svg></div></div>
    <div class="search-row"><label class="search search-sm"><svg class="i22"><use href="#search"/></svg><input type="text" placeholder="Search items..." aria-label="Search items"></label></div>
    <ul class="list">
      <li class="div l1"><svg class="i20"><use href="#chev"/></svg><svg class="i24 fo"><use href="#folder"/></svg>DIV 03 — Concrete<span class="count">0</span></li>
      <li class="div l2"><svg class="i20"><use href="#chev"/></svg><svg class="i24 fo"><use href="#folder"/></svg>Building Concrete<span class="count">0</span></li>
      <li class="div l3"><svg class="i20"><use href="#chev"/></svg><svg class="i24 fo"><use href="#folder"/></svg>Slab on Grade<span class="count">2</span></li>
      <li class="item more-below c-teal"><svg class="ty"><use href="#t-area"/></svg><span class="name">Slab on Grade – 4"…</span><span class="qty">2,958.29</span><span class="unit">SF</span><i class="dot"></i></li>
      <li class="item open c-olive"><svg class="sub-chev"><use href="#chev"/></svg><svg class="ty"><use href="#t-area"/></svg><span class="name">Slab on Grade – 6…</span><span class="qty">11,716.12</span><span class="unit">SF</span><i class="dot"></i></li>
      <li class="item part"><svg class="hook"><use href="#sub"/></svg><span class="name">Concrete – 4,…</span><span class="qty">227.81</span><span class="unit">CY</span></li>
      <li class="item part"><svg class="hook"><use href="#sub"/></svg><span class="name">Vapor Reta…</span><span class="qty">12,887.73</span><span class="unit">SF</span></li>
      <li class="item part"><svg class="hook"><use href="#sub"/></svg><span class="name">Welded Wir…</span><span class="qty">12,887.73</span><span class="unit">SF</span></li>
      <li class="item part"><svg class="hook"><use href="#sub"/></svg><span class="name">Slab Edge Form</span><span class="qty">472.54</span><span class="unit">LF</span></li>
      <li class="div l1"><svg class="i20"><use href="#chev"/></svg><svg class="i24 fo"><use href="#folder"/></svg>DIV 07 — Thermal &amp; Moisture Protection<span class="count">0</span></li>
      <li class="div l2"><svg class="i20"><use href="#chev"/></svg><svg class="i24 fo"><use href="#folder"/></svg>Metal Roof &amp; Wall Panels<span class="count">0</span></li>
      <li class="div l3"><svg class="i20"><use href="#chev"/></svg><svg class="i24 fo"><use href="#folder"/></svg>Wall Panels<span class="count">1</span></li>
      <li class="item c-purple"><svg class="ty"><use href="#t-line"/></svg><span class="name">Insulated Metal Wall …</span><span class="qty">520.97</span><span class="unit">LF</span><i class="dot"></i></li>
      <li class="div l1"><svg class="i20"><use href="#chev"/></svg><svg class="i24 fo"><use href="#folder"/></svg>DIV 08 — Openings<span class="count">0</span></li>
      <li class="div l2"><svg class="i20"><use href="#chev"/></svg><svg class="i24 fo"><use href="#folder"/></svg>Doors &amp; Frames<span class="count">0</span></li>
      <li class="div l3"><svg class="i20"><use href="#chev"/></svg><svg class="i24 fo"><use href="#folder"/></svg>Hollow Metal Doors<span class="count">1</span></li>
      <li class="item c-teal"><svg class="ty"><use href="#t-count"/></svg><span class="name">Exterior Door – HM 3'-0" …</span><span class="qty">6</span><span class="unit">EA</span><i class="dot"></i></li>
      <li class="div l2"><svg class="i20"><use href="#chev"/></svg><svg class="i24 fo"><use href="#folder"/></svg>Specialty Doors<span class="count">0</span></li>
      <li class="div l3"><svg class="i20"><use href="#chev"/></svg><svg class="i24 fo"><use href="#folder"/></svg>Overhead Sectional Doors<span class="count">1</span></li>
      <li class="item c-orange"><svg class="ty"><use href="#t-count"/></svg><span class="name">Overhead Sectional Door …</span><span class="qty">4</span><span class="unit">EA</span><i class="dot"></i></li>
      <li class="div l1"><svg class="i20"><use href="#chev"/></svg><svg class="i24 fo"><use href="#folder"/></svg>DIV 09 — Finishes<span class="count">0</span></li>
      <li class="div l2"><svg class="i20"><use href="#chev"/></svg><svg class="i24 fo"><use href="#folder"/></svg>Gypsum Board<span class="count">0</span></li>
      <li class="div l3"><svg class="i20"><use href="#chev"/></svg><svg class="i24 fo"><use href="#folder"/></svg>Shaft Wall<span class="count">1</span></li>
      <li class="item c-brown"><svg class="ty"><use href="#t-line"/></svg><span class="name">3-Hr Fire Barrier – De…</span><span class="qty">70.81</span><span class="unit">LF</span><i class="dot"></i></li>
      <li class="div l2"><svg class="i20"><use href="#chev"/></svg><svg class="i24 fo"><use href="#folder"/></svg>Non-Structural Metal Framing<span class="count">0</span></li>
      <li class="div l3"><svg class="i20"><use href="#chev"/></svg><svg class="i24 fo"><use href="#folder"/></svg>Interior Walls<span class="count">1</span></li>
      <li class="item c-navy"><svg class="ty"><use href="#t-seg"/></svg><span class="name">Interior Partition – 3-…</span><span class="qty">219.03</span><span class="unit">LF</span><i class="dot"></i></li>
      <li class="div l1"><svg class="i20"><use href="#chev"/></svg><svg class="i24 fo"><use href="#folder"/></svg>DIV 26 — Electrical<span class="count">0</span></li>
      <li class="div l2"><svg class="i20"><use href="#chev"/></svg><svg class="i24 fo"><use href="#folder"/></svg>Interior Lighting<span class="count">0</span></li>
      <li class="div l3"><svg class="i20"><use href="#chev"/></svg><svg class="i24 fo"><use href="#folder"/></svg>Light Fixtures<span class="count">1</span></li>
      <li class="item c-violet"><svg class="ty"><use href="#t-count"/></svg><span class="name">LED Troffer – Type A, 2×2</span><span class="qty">68</span><span class="unit">EA</span><i class="dot"></i></li>
    </ul>
  </aside>
</div>

<footer class="status">
  <div class="toggles">
    <button class="on">Ortho: On</button><button class="on">Snap: On</button><button>Snap PDF: Off</button><button class="on">Auto Merge: On</button><button class="on">Auto Scroll: On</button>
  </div>
  <button class="scale-btn">Scale: 1/8" = 1'-0"</button>
</footer>
</body>
</html>
```
FILE: styles.css
```css
* { box-sizing: border-box; }
html, body { height: 100%; margin: 0; }
body {
  display: flex;
  flex-direction: column;
  font: 400 22px/28px Inter, "Liberation Sans", sans-serif;
  color: #171717;
  background: #fff;
  overflow: hidden;
}
button, input, select { font: inherit; color: inherit; }
button { border: 0; background: none; padding: 0; white-space: nowrap; }
a { color: inherit; text-decoration: none; }
ul { list-style: none; margin: 0; padding: 0; }
h1, h2, p { margin: 0; }
svg { flex: none; fill: none; stroke: currentColor; stroke-width: 2; stroke-linecap: round; stroke-linejoin: round; }
.defs { position: absolute; width: 0; height: 0; }
.red { stroke: #dc4a45; }
.dash { stroke-linecap: butt; stroke-dasharray: 3 1; }
.red-fill { fill: #dc4a45; stroke: none; }
.tint { fill: #fbe9e8; }
.node { fill: #fff; }
.muted { color: #666; }
.i18 { width: 18px; height: 18px; }
.i20 { width: 20px; height: 20px; }
.i22 { width: 22px; height: 22px; }
.i24 { width: 24px; height: 24px; }
.i26 { width: 26px; height: 26px; }
.i28 { width: 28px; height: 28px; }
.i30 { width: 30px; height: 30px; }

/* Top bar */
.topbar {
  display: grid;
  grid-template-columns: 1fr auto 1fr;
  align-items: center;
  height: 82px;
  padding: 0 24px;
  border-bottom: 2px solid #e5e5e5;
}
.tabs {
  display: flex;
  align-items: center;
  justify-self: start;
  height: 60px;
  padding: 0 4px;
  border: 2px solid #e5e5e5;
  border-radius: 12px;
  background: #f6f4f2;
}
.tab { height: 48px; padding: 0 22px; border-radius: 8px; font-weight: 500; color: #555; }
.tab:first-child { padding-left: 20px; }
.tab-active { background: #fff; color: #111; box-shadow: 0 2px 6px #0000000d; }
.tab-divider { width: 2px; height: 32px; margin: 0 8px 0 4px; background: #e5e5e5; }
.title { font-size: 28px; line-height: 36px; font-weight: 600; }
.actions { display: flex; align-items: center; justify-self: end; gap: 17px; }
.credits {
  display: flex;
  align-items: center;
  gap: 10px;
  height: 64px;
  padding: 0 16px;
  border: 2px solid #e8e8e8;
  border-radius: 12px;
  font-size: 25px;
  color: #666;
}
.btn {
  display: flex;
  align-items: center;
  gap: 25px;
  height: 56px;
  padding: 0 17px;
  border: 2px solid #e3e3e3;
  border-radius: 12px;
  background: #fff;
  font-size: 24px;
  font-weight: 500;
  box-shadow: 0 1px 3px #0000001a;
}
.btn-icon { width: 55px; padding: 0; justify-content: center; }
.caret { margin-left: 5px; color: #666; }

/* Toolbar */
.toolbar { display: flex; gap: 14px; padding: 8px 16px 4px; border-bottom: 2px solid #e5e5e5; }
.group { display: flex; gap: 6px; height: 108px; padding: 4px; border: 2px solid #e5e5e5; border-radius: 12px; }
.tool {
  display: flex;
  flex-direction: column;
  align-items: center;
  justify-content: center;
  gap: 4px;
  min-width: 86px;
  padding: 4px 12px 0;
  border-radius: 12px;
  font-weight: 500;
  color: #2b2b2b;
}
.tool svg { width: 44px; height: 44px; }
.tool-active { background: #fbe9e8; color: #111; }
.tool:disabled { opacity: .4; }
.more { width: 27px; margin-left: -6px; padding-top: 8px; }
.more-wide { width: 31px; }

/* Work area */
.work { flex: 1; min-height: 0; display: flex; }
.sheets, .takeoff { display: flex; flex-direction: column; background: #fafafa; }
.sheets { width: 562px; border-right: 4px solid #e6e6e6; }
.takeoff { width: 652px; border-left: 4px solid #e6e6e6; }
.panel-head {
  display: flex;
  align-items: center;
  height: 66px;
  padding: 0 16px;
  border-bottom: 2px solid #ece8e4;
  background: #faf7f4;
}
.panel-head h2 { font-size: 24px; font-weight: 600; }
.sheets h2 { margin-left: 10px; }
.takeoff h2 { color: #333; }
.bar { width: 2px; height: 28px; margin: 0 12px; background: #777; }
.panel-head a { font-size: 24px; color: #666; }
.head-tools { display: flex; margin-left: auto; }
.head-tools button { display: grid; place-items: center; width: 48px; height: 48px; }
.head-tools svg { stroke-width: 2.4; }
.takeoff .head-tools { margin-right: -4px; }
.sheets .head-tools { margin-right: -4px; }
.search-row { padding: 8px 12px; border-bottom: 2px solid #e8e8e8; }
.search-sheets { padding: 12px 16px; }
.search {
  display: flex;
  align-items: center;
  gap: 12px;
  height: 56px;
  padding: 0 16px;
  border: 2px solid #e5e5e5;
  border-radius: 12px;
  background: #fff;
  color: #666;
  font-size: 24px;
}
.search-sm { height: 48px; gap: 16px; padding: 0 11px; font-size: 22px; }
.search input { flex: 1; min-width: 0; border: 0; padding: 2px 0 0; background: none; outline: 0; }
.search-sm input { padding: 0; }
.search input::placeholder { color: #666; opacity: 1; }

/* Sheet tree */
.tree { flex: 1; min-height: 0; padding-top: 8px; overflow: hidden; }
.folder { display: flex; align-items: center; height: 42px; margin-top: 6px; padding: 2px 20px 0 22px; font-weight: 500; }
.folder-b { padding-left: 46px; }
.folder .fo { margin: 0 8px 0 10px; }
.total { margin-left: auto; font-size: 24px; font-weight: 400; color: #666; }
.branch { position: relative; }
.branch::before { content: ""; position: absolute; top: 2px; bottom: 0; border-left: 2px dotted #999; }
.branch-a::before { left: 32px; }
.branch-b::before { left: 56px; }
.branch-c::before { left: 92px; top: 0; }
.sheet { position: relative; display: flex; gap: 4px; height: 32px; margin-top: 4px; padding: 0 60px 0 96px; }
.sheet::before { content: ""; position: absolute; left: 62px; top: 23px; width: 16px; border-top: 2px dotted #999; }
.sheet button { flex: 1; min-width: 0; padding: 0 16px; overflow: hidden; text-align: left; text-overflow: ellipsis; border-radius: 12px; }
.sheet-open { padding-left: 70px; }
.sheet-open > svg { margin: 6px 2px 6px 0; color: #555; }
.sheet-open button { background: #171717; color: #fff; font-weight: 500; }
.scale { padding: 0 8px; border-radius: 6px; background: #fbe5da; color: #e05a1b; font-size: 20px; line-height: 32px; font-weight: 600; }
.layers { display: flex; align-items: center; gap: 5px; background: #d6eadd; color: #2f8f5b; }

/* Takeoff item rows */
.item { position: relative; display: flex; align-items: center; height: 40px; border-bottom: 2px solid #e8e8e8; font-size: 20px; color: #222; }
.branch-c .item { margin: 0 12px 0 88px; padding: 0 74px 0 53px; }
.branch-c .item::before { content: ""; position: absolute; left: 10px; top: 18px; width: 3px; border-top: 2px dotted #999; }
.ty { width: 22px; height: 22px; margin-right: 13px; }
.name { flex: 1; min-width: 0; white-space: nowrap; overflow: hidden; text-overflow: ellipsis; }
.qty { margin-left: 14px; font-size: 18px; font-variant-numeric: tabular-nums; }
.unit { width: 76px; text-align: right; font-size: 18px; color: #737373; }
.dot { width: 21px; height: 21px; margin-left: 20px; border-radius: 50%; background: var(--c); }
.item .ty { color: var(--c); }
.c-brown { --c: #a16207; }
.c-teal { --c: #115e59; }
.c-purple { --c: #86198f; }
.c-navy { --c: #1e293b; }
.c-orange { --c: #c2410c; }
.c-olive { --c: #3f5610; }
.c-violet { --c: #6b21a8; }

/* Snippets */
.snips { flex: 0 0 40%; border-top: 2px solid #e5e5e5; }
.snips-head { padding: 11px 16px 12px; border-bottom: 2px solid #ece8e4; background: #faf7f4; }
.seg { display: inline-flex; height: 44px; border: 2px solid #e5e5e5; border-radius: 8px; overflow: hidden; vertical-align: top; }
.seg button { padding: 0 16px; font-weight: 600; color: #555; background: #fff; }
.seg .seg-on { border-left: 2px solid #e5e5e5; background: #faf7f4; color: #111; }
.snips p { padding: 12px 24px; line-height: 32px; color: #666; }
.snips b { font-weight: 600; color: #444; }
kbd { display: inline-block; padding: 0 8px; border: 2px solid #e5e5e5; border-radius: 6px; font: inherit; line-height: 26px; background: #fff; }

/* Drawing canvas */
.canvas { position: relative; flex: 1; min-width: 0; display: flex; align-items: center; justify-content: center; background: #d1d1d1; }
.page { width: calc(100% - 96px); height: auto; box-shadow: 0 8px 24px #00000014; stroke: none; stroke-linecap: butt; stroke-linejoin: miter; stroke-width: 1; }
.page text { stroke: none; }
.tiny { font: 6px/1 "Liberation Sans", sans-serif; fill: #333; }
.t5 { font-size: 5px; }
.mid { text-anchor: middle; }
.room-text { font: 5px/1 "Liberation Sans", sans-serif; fill: #1d3d41; }
.plan { font: 11px/1 "Liberation Sans", sans-serif; fill: #111; }
.sheet-no { font: 30px/1 "Liberation Sans", sans-serif; fill: #000; }
.grip { position: absolute; top: calc(50% - 64px); display: grid; place-items: center; width: 22px; height: 128px; background: #fff; color: #555; box-shadow: 0 2px 6px #0000001f; }
.grip-left { left: 0; border-radius: 0 12px 12px 0; }
.grip-right { right: 0; border-radius: 12px 0 0 12px; }
.float { position: absolute; bottom: 24px; display: flex; flex-direction: column; align-items: center; padding: 4px; border-radius: 14px; background: #fff; color: #555; box-shadow: 0 4px 12px #00000026; }
.float > * { display: grid; place-items: center; height: 48px; min-width: 46px; }
.float svg { stroke-width: 2.4; }
.float-left { left: 25px; }
.float-right { right: 24px; width: 65px; }

/* Takeoff panel */
.bid-row { display: flex; align-items: center; gap: 9px; padding: 8px 16px; border-bottom: 2px solid #e8e8e8; }
.pick { position: relative; flex: 1; }
.pick select { display: block; width: 100%; height: 48px; padding: 0 12px; border: 2px solid #e5e5e5; border-radius: 8px; background: #fff; font-size: 24px; appearance: none; }
.pick svg { position: absolute; right: 14px; top: 14px; color: #666; }
.div { display: flex; align-items: center; height: 43px; border-bottom: 2px solid #ece8e4; background: #fcf8f3; font-weight: 500; }
.div .i20 { color: #555; }
.div .fo { margin: 0 8px 0 10px; }
.l1 { padding-left: 18px; }
.l2 { padding-left: 42px; }
.l3 { padding-left: 66px; }
.count { min-width: 32px; height: 32px; margin-left: 9px; padding: 0 7px; border: 2px solid #ece8e4; border-radius: 8px; text-align: center; font-weight: 400; line-height: 28px; color: #666; }
.list .item { padding: 0 75px 0 126px; background: #fafbfb; }
.list .item::before { content: ""; position: absolute; left: 76px; top: 0; width: 8px; height: 20px; border: dotted #999; border-width: 0 0 2px 2px; }
.list .more-below::after { content: ""; position: absolute; left: 76px; top: 20px; height: 20px; border-left: 2px dotted #999; }
.list .open { padding-left: 92px; }
.sub-chev { width: 14px; height: 14px; margin: 0 19px 0 1px; color: #666; }
.list .part { padding: 0 146px 0 162px; background: #faf9f7; }
.list .part::before { display: none; }
.hook { width: 16px; height: 16px; margin-right: 15px; color: #777; }

/* Status bar */
.status { display: grid; grid-template-columns: 1fr auto 1fr; align-items: center; height: 56px; padding: 0 32px; border-top: 2px solid #e5e5e5; }
.toggles { grid-column: 2; display: flex; gap: 9px; }
.toggles button { height: 44px; padding: 0 16px; border: 2px solid #e5e5e5; border-radius: 10px; background: #f5f5f5; color: #444; font-weight: 500; }
.toggles .on { border-color: #eba98c; background: #fce6db; color: #d9581d; }
.scale-btn { justify-self: end; height: 44px; padding: 0 20px; border-radius: 8px; background: #0b9560; color: #fff; font-weight: 600; }
```
